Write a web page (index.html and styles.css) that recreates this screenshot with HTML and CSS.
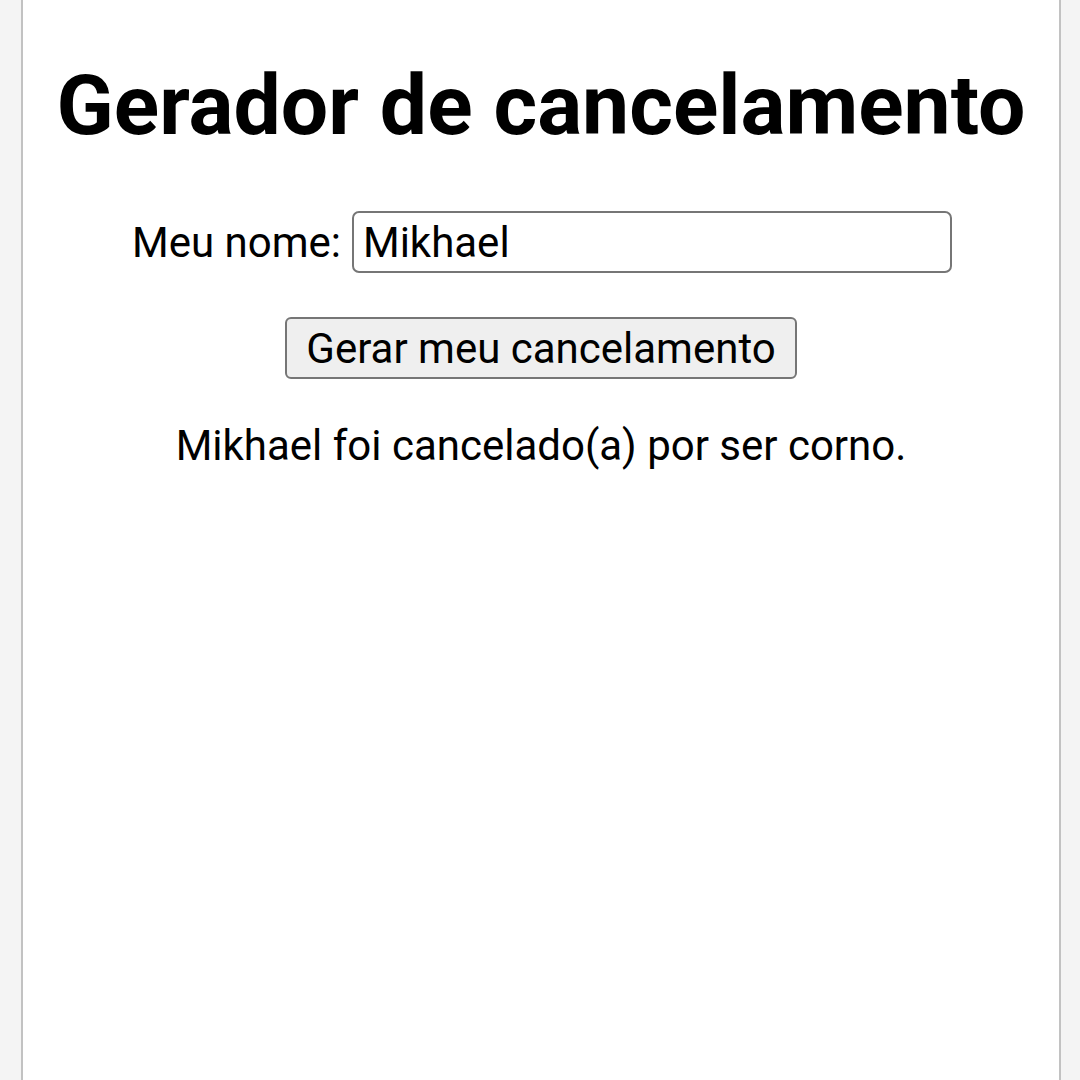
FILE: index.html
```html
<!DOCTYPE html>
<html lang="pt">
<head>
<meta charset="utf-8">
<title>Gerador de cancelamento</title>
<link rel="stylesheet" href="styles.css">
</head>
<body>
<main class="page">
  <h1 class="title">Gerador de cancelamento</h1>
  <div class="row">
    <label class="label" for="nome">Meu nome:</label>
    <input class="field" id="nome" type="text" value="Mikhael">
  </div>
  <div class="actions">
    <button class="btn" type="button">Gerar meu cancelamento</button>
  </div>
  <p class="result">Mikhael foi cancelado(a) por ser corno.</p>
</main>
</body>
</html>
```
FILE: styles.css
```css
html, body {
  margin: 0;
  padding: 0;
  background: #f4f4f4;
}
body {
  font-family: Roboto, "Liberation Sans", sans-serif;
  color: #000;
}
.page {
  box-sizing: border-box;
  width: 1040px;
  margin-left: 21px;
  min-height: 1080px;
  background: #fff;
  border-left: 2px solid #c2c2c2;
  border-right: 2px solid #c2c2c2;
  text-align: center;
  padding-top: 1px;
}
.title {
  font-size: 84px;
  font-weight: 700;
  line-height: normal;
  white-space: nowrap;
  margin: 55px 0 0;
}
.row {
  display: flex;
  justify-content: center;
  align-items: center;
  gap: 11px;
  margin-top: 56px;
}
.label {
  font-size: 42px;
  margin-left: 2px;
}
.field {
  box-sizing: border-box;
  width: 600px;
  height: 62px;
  border: 2.6px solid #767676;
  border-radius: 7px;
  padding: 0 9px;
  font-family: Roboto, "Liberation Sans", sans-serif;
  font-size: 42px;
  color: #000;
  background: #fff;
}
.actions {
  margin-top: 44px;
  display: flex;
  justify-content: center;
}
.btn {
  box-sizing: border-box;
  height: 62px;
  padding: 0 19px;
  border: 2.6px solid #767676;
  border-radius: 6px;
  background: #efefef;
  font-family: Roboto, "Liberation Sans", sans-serif;
  font-size: 42px;
  color: #000;
}
.result {
  font-size: 42px;
  line-height: normal;
  margin: 42px 0 0;
}
```
